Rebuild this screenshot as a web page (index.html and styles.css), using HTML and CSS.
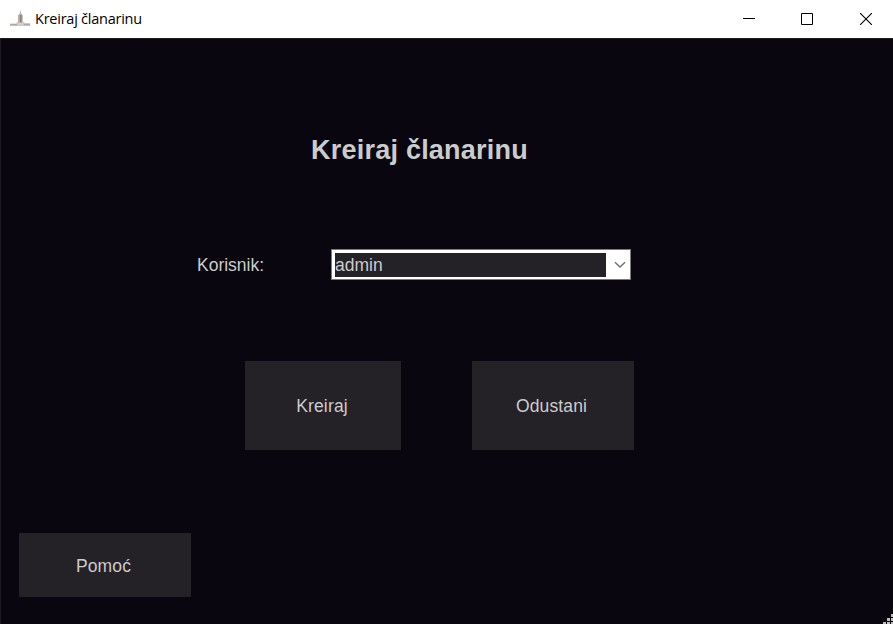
FILE: index.html
```html
<!DOCTYPE html>
<html lang="hr">
<head>
<meta charset="utf-8">
<title>Kreiraj članarinu</title>
<link rel="stylesheet" href="styles.css">
</head>
<body>
<div class="window">
  <header class="titlebar">
    <svg class="app-icon" width="20" height="16" viewBox="0 0 20 16">
      <path d="M0 13.5h6l1-1.5h7l1 1h5v3H0z" fill="#cfc8c2"/>
      <path d="M0 14.2h7v1H0zM14 14.2h6v1h-6z" fill="#a89e98"/>
      <path d="M10.5 0l.8 4 1.4 1v8H8V5l1.7-1z" fill="#b5aca5"/>
      <path d="M10 5h1.5v8H10z" fill="#8a7e79"/>
      <path d="M7 12.5h6v2H7z" fill="#d8cfc7"/>
    </svg>
    <span class="caption">Kreiraj članarinu</span>
    <div class="controls">
      <svg class="minimize" width="12" height="12" viewBox="0 0 12 12"><path d="M0 5.5h12" stroke="#000"/></svg>
      <svg width="12" height="12" viewBox="0 0 12 12"><path d="M.5.5h11v11H.5z" fill="none" stroke="#000"/></svg>
      <svg width="12" height="12" viewBox="0 0 12 12"><path d="M0 0l12 12M12 0L0 12" stroke="#000" stroke-width="1.1"/></svg>
    </div>
  </header>
  <main class="form">
    <h1>Kreiraj članarinu</h1>
    <div class="field">
      <span class="label">Korisnik:</span>
      <div class="combo">
        <span class="value">admin</span>
        <svg class="arrow" width="12" height="8" viewBox="0 0 12 8"><path d="M1 1.2l5 4.8 5-4.8" fill="none" stroke="#707070" stroke-width="1.4"/></svg>
      </div>
    </div>
    <div class="actions">
      <button class="btn create">Kreiraj</button>
      <button class="btn cancel">Odustani</button>
    </div>
    <button class="btn help">Pomoć</button>
    <svg class="grip" width="10" height="10" viewBox="0 0 10 10"><path d="M8 0h2v3H8zM4 4h3v3H4zM8 4h2v3H8zM0 8h3v2H0zM4 8h3v2H4zM8 8h2v2H8z" fill="#bfbfbf"/></svg>
  </main>
</div>
</body>
</html>
```
FILE: styles.css
```css
* { box-sizing: border-box; }
body { margin: 0; }
.window {
  width: 893px;
  height: 624px;
  display: flex;
  flex-direction: column;
  overflow: hidden;
  font-family: "Liberation Sans", Arial, sans-serif;
}
.titlebar {
  height: 38px;
  flex: none;
  display: flex;
  align-items: center;
  padding: 0 21px 0 10px;
  background: #fff;
  color: #000;
}
.app-icon { margin-top: -2px; }
.caption {
  margin-left: 5px;
  font: 14.5px/20px "Open Sans", "Noto Sans", sans-serif;
  letter-spacing: -0.24px;
}
.controls { margin-left: auto; display: flex; gap: 47px; }
.controls svg { display: block; }
.controls .minimize { margin-right: -1px; }
.form {
  position: relative;
  flex: 1;
  display: flex;
  flex-direction: column;
  align-items: flex-start;
  background: #09060f;
  border-top: 1px solid #1d1b22;
  border-left: 1px solid #1d1b22;
  color: #cccccc;
}
h1 {
  margin: 95px 0 0 310px;
  font-size: 27px;
  line-height: 32px;
  font-weight: bold;
  letter-spacing: 0.23px;
  white-space: nowrap;
}
.field {
  display: flex;
  align-items: center;
  margin: 83px 0 0 196px;
  height: 31px;
  font-size: 17.5px;
}
.label { width: 134px; padding-top: 2px; }
.combo {
  width: 300px;
  height: 31px;
  display: flex;
  align-items: center;
  background: #fff;
  border: 1px solid #7a7a7a;
  padding: 2px 2px 2px 3px;
}
.value {
  width: 271px;
  height: 24px;
  line-height: 24px;
  background: #242127;
}
.arrow { margin-left: 8px; }
.actions {
  display: flex;
  gap: 71px;
  margin: 81px 0 0 244px;
}
.btn {
  border: 0;
  padding: 1px 2px 0 0;
  background: #242127;
  color: #cccccc;
  font: 17.5px/20px "Liberation Sans", Arial, sans-serif;
  letter-spacing: 0.15px;
}
.create { width: 156px; height: 89px; }
.cancel { width: 162px; height: 89px; padding-right: 3px; }
.help { width: 172px; height: 64px; margin: 83px 0 0 18px; padding: 2px 3px 0 0; }
.grip { position: absolute; right: 0; bottom: 0; }
```
